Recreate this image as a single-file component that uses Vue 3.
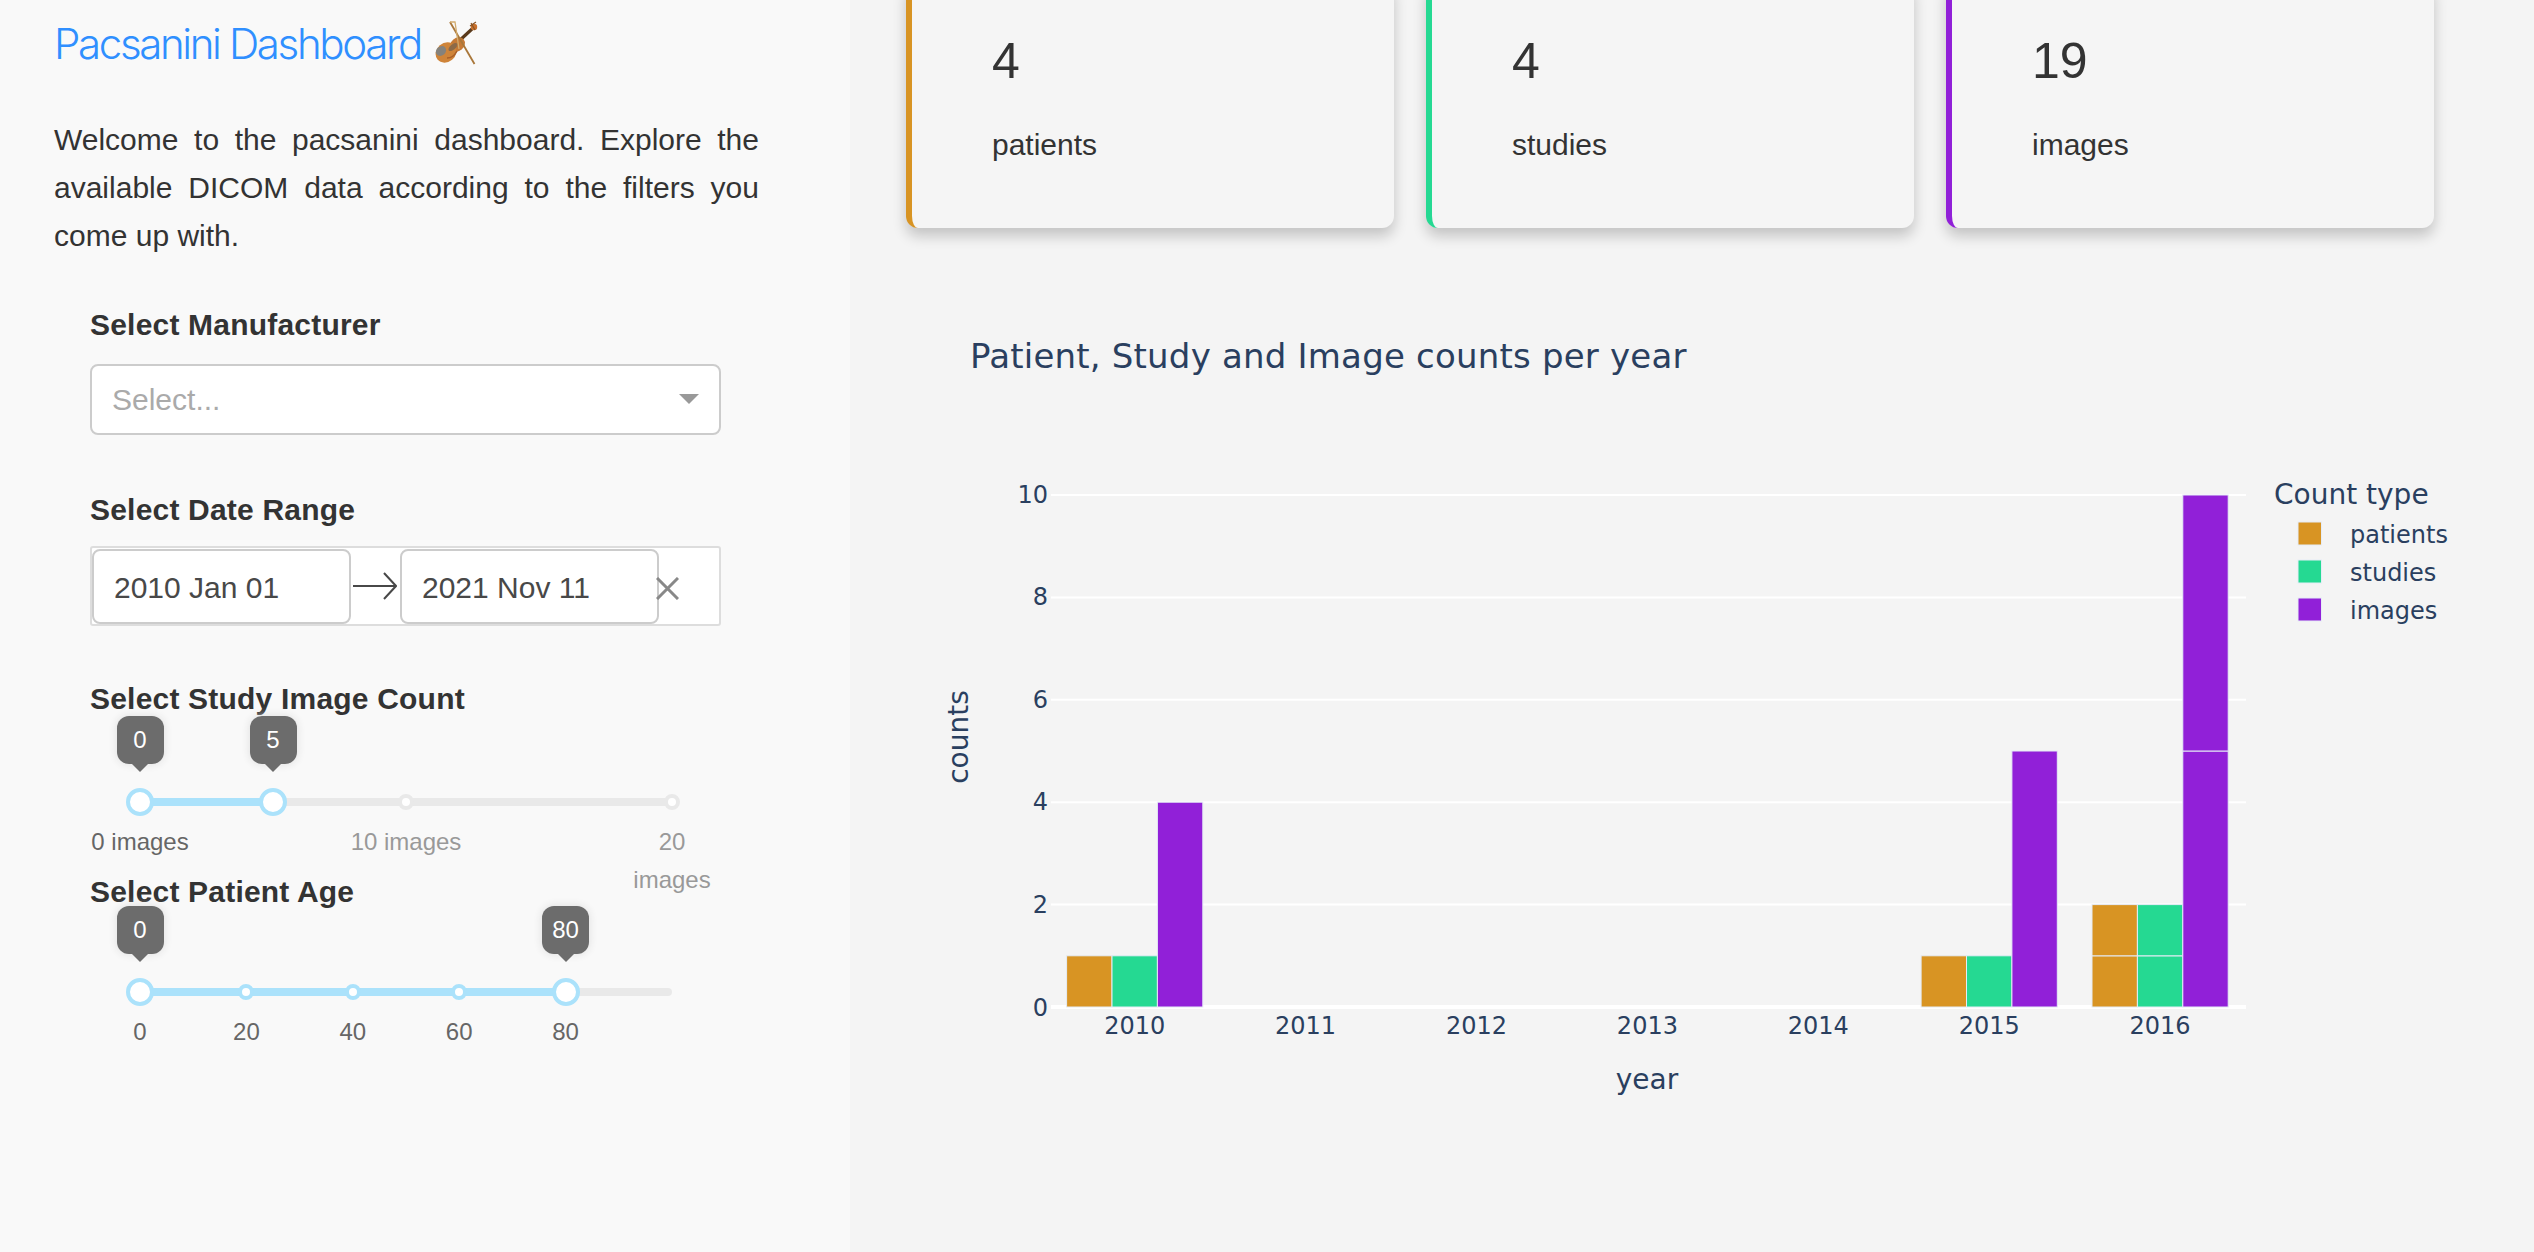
<script setup>
// Tableau de bord Pacsanini : filtres à gauche, compteurs et histogramme à droite
const counters = [
  { value: 4, label: 'patients', color: '#d89423' },
  { value: 4, label: 'studies', color: '#25d992' },
  { value: 19, label: 'images', color: '#9120d8' },
]

const imageSlider = {
  max: 20,
  range: [0, 5],
  marks: [
    { value: 0, label: '0 images' },
    { value: 10, label: '10 images' },
    { value: 20, label: '20 images', narrow: true },
  ],
}
const ageSlider = {
  max: 100,
  range: [0, 80],
  marks: [0, 20, 40, 60, 80].map((v) => ({ value: v, label: String(v) })),
}
const sliders = [
  { title: 'Select Study Image Count', ...imageSlider },
  { title: 'Select Patient Age', ...ageSlider },
]

function pct(value, max) {
  return `${(value / max) * 100}%`
}
function isActive(slider, value) {
  return value >= slider.range[0] && value <= slider.range[1]
}

// Axes du graphique, en coordonnées de page (voir viewBox)
const zeroY = 1007
const unit = 51.2
const yTicks = [0, 2, 4, 6, 8, 10]
const years = [2010, 2011, 2012, 2013, 2014, 2015, 2016]
const yearX = (i) => 1134.7 + i * 170.9
const barW = 45.4

// Une ligne par segment empilé : annee, serie, base, hauteur
const segments = [
  [0, 0, 0, 1], [0, 1, 0, 1], [0, 2, 0, 4],
  [5, 0, 0, 1], [5, 1, 0, 1], [5, 2, 0, 5],
  [6, 0, 0, 1], [6, 0, 1, 1], [6, 1, 0, 1], [6, 1, 1, 1], [6, 2, 0, 5], [6, 2, 5, 5],
].map(([year, serie, base, size]) => ({
  x: yearX(year) - barW * 1.5 + serie * barW,
  y: zeroY - (base + size) * unit,
  h: size * unit,
  fill: counters[serie].color,
}))
</script>

<template>
  <div class="page">
    <aside class="sidebar">
      <h2 class="title">
        <span>Pacsanini Dashboard</span>
        <svg class="violin" viewBox="0 0 44 44" aria-hidden="true">
          <path d="M25 20 L38 8" stroke="#5a3a1c" stroke-width="3.2" fill="none" />
          <circle cx="40" cy="6" r="3.2" fill="#c8702c" />
          <path d="M37 2 L41 9 M42 1 L36 5" stroke="#8a5526" stroke-width="1.2" fill="none" />
          <ellipse cx="23.5" cy="23.5" rx="8" ry="6.5" transform="rotate(-40 23.5 23.5)" fill="#c67a36" />
          <ellipse cx="12" cy="31.5" rx="11" ry="9.5" transform="rotate(-40 12 31.5)" fill="#cf8439" />
          <ellipse cx="7" cy="30" rx="5.5" ry="4.5" transform="rotate(-40 7 30)" fill="#85827c" />
          <ellipse cx="19" cy="26" rx="5.5" ry="2.6" transform="rotate(-40 19 26)" fill="#8c6a48" />
          <path d="M13 37 C17 37 21 34 23 30" stroke="#a85f28" stroke-width="1.6" fill="none" />
          <path d="M16 1 L40.5 43" stroke="#a9773a" stroke-width="1.8" fill="none" />
          <path d="M16 1 L21 1 L25 28" stroke="#d2ab6d" stroke-width="1.3" fill="none" />
        </svg>
      </h2>
      <p class="intro">
        Welcome to the pacsanini dashboard. Explore the available DICOM data according to the filters you come up with.
      </p>

      <div class="filters">
        <label class="filter-label">Select Manufacturer</label>
        <div class="select">
          <span>Select...</span>
          <i class="caret"></i>
        </div>

        <label class="filter-label date-label">Select Date Range</label>
        <div class="dates">
          <span class="date-input">2010 Jan 01</span>
          <svg class="date-arrow" viewBox="0 0 44 28" aria-hidden="true">
            <path d="M0 14 H43 M31 1 L43 14 L31 27" fill="none" stroke="#484848" stroke-width="2" />
          </svg>
          <span class="date-input">2021 Nov 11</span>
          <svg class="date-clear" viewBox="0 0 23 23" aria-hidden="true">
            <path d="M1 1 L22 22 M22 1 L1 22" fill="none" stroke="#888" stroke-width="3" />
          </svg>
        </div>

        <template v-for="slider in sliders" :key="slider.title">
          <label class="filter-label slider-label">{{ slider.title }}</label>
          <div class="slider">
            <div
              class="slider-track"
              :style="{ left: pct(slider.range[0], slider.max), width: pct(slider.range[1] - slider.range[0], slider.max) }"
            ></div>
            <span
              v-for="mark in slider.marks"
              :key="'dot' + mark.value"
              class="slider-dot"
              :class="{ active: isActive(slider, mark.value) }"
              :style="{ left: pct(mark.value, slider.max) }"
            ></span>
            <span
              v-for="mark in slider.marks"
              :key="'mark' + mark.value"
              class="slider-mark"
              :class="{ active: isActive(slider, mark.value), narrow: mark.narrow }"
              :style="{ left: pct(mark.value, slider.max) }"
            >{{ mark.label }}</span>
            <template v-for="value in slider.range" :key="value">
              <span class="slider-handle" :style="{ left: pct(value, slider.max) }"></span>
              <span class="slider-tip" :style="{ left: pct(value, slider.max) }">{{ value }}</span>
            </template>
          </div>
        </template>
      </div>
    </aside>

    <main class="main">
      <div class="cards">
        <div v-for="c in counters" :key="c.label" class="card" :style="{ borderLeftColor: c.color }">
          <div class="card-value">{{ c.value }}</div>
          <div class="card-label">{{ c.label }}</div>
        </div>
      </div>

      <svg class="chart" viewBox="850 260 1684 992">
        <text x="970" y="368" class="chart-title">Patient, Study and Image counts per year</text>

        <g v-for="t in yTicks" :key="t">
          <line
            x1="1051"
            x2="2246"
            :y1="zeroY - t * unit"
            :y2="zeroY - t * unit"
            stroke="#fff"
            :stroke-width="t === 0 ? 4 : 2"
          />
          <text x="1048" :y="zeroY - t * unit + (t === 0 ? 9 : 8)" text-anchor="end" class="tick">{{ t }}</text>
        </g>

        <rect
          v-for="(s, i) in segments"
          :key="i"
          :x="s.x"
          :y="s.y"
          :width="barW"
          :height="s.h"
          :fill="s.fill"
          stroke="#e5ecf6"
          stroke-width="1"
        />

        <text v-for="(y, i) in years" :key="y" :x="yearX(i)" y="1034" text-anchor="middle" class="tick">{{ y }}</text>

        <text x="1647" y="1089" text-anchor="middle" class="axis-title">year</text>
        <text transform="translate(968 737) rotate(-90)" text-anchor="middle" class="axis-title">counts</text>

        <text x="2274" y="504" class="axis-title">Count type</text>
        <g v-for="(c, i) in counters" :key="c.label">
          <rect x="2298" :y="522 + i * 38" width="23.5" height="23" :fill="c.color" stroke="#e5ecf6" stroke-width="1" />
          <text x="2350" :y="543 + i * 38" class="tick">{{ c.label }}</text>
        </g>
      </svg>
    </main>
  </div>
</template>

<style>
html,
body {
  margin: 0;
  overflow: hidden;
}
</style>

<style scoped>
.page {
  display: flex;
  width: 2534px;
  height: 1252px;
  overflow: hidden;
  font-family: "Liberation Sans", Arial, sans-serif;
  color: #333;
}

.sidebar {
  flex: 0 0 850px;
  box-sizing: border-box;
  padding: 13px 91px 0 54px;
  background: #f9f9f9;
}

.title {
  display: flex;
  align-items: center;
  height: 60px;
  margin: 0;
  font-family: "Inter", "Liberation Sans", sans-serif;
  font-size: 42px;
  font-weight: 300;
  letter-spacing: -2.35px;
  color: #2f8fff;
  white-space: nowrap;
}

.violin {
  width: 44px;
  height: 44px;
  margin-left: 13px;
}

.intro {
  margin: 43px 0 0;
  font-size: 30px;
  line-height: 48px;
  text-align: justify;
}

.filters {
  margin: 41px 38px 0 36px;
}

.filter-label {
  display: block;
  font-size: 30px;
  font-weight: 700;
  line-height: 48px;
  letter-spacing: 0.2px;
}

.select {
  display: flex;
  align-items: center;
  justify-content: space-between;
  box-sizing: border-box;
  height: 71px;
  margin-top: 15px;
  padding: 0 20px;
  background: #fff;
  border: 2px solid #ccc;
  border-radius: 8px;
  font-size: 30px;
  color: #aaa;
}

.caret {
  border-style: solid;
  border-width: 10px 10px 0;
  border-color: #999 transparent transparent;
  margin-top: -2px;
}

.date-label {
  margin-top: 51px;
}

.dates {
  position: relative;
  display: flex;
  align-items: center;
  box-sizing: border-box;
  height: 80px;
  margin-top: 12px;
  background: #fff;
  border: 2px solid #ddd;
  border-radius: 3px;
}

.date-input {
  box-sizing: border-box;
  flex: 0 0 259px;
  height: 75px;
  padding-left: 20px;
  border: 2px solid #ccc;
  border-radius: 8px;
  background: #fff;
  font-size: 30px;
  line-height: 73px;
  color: #484848;
}

.date-arrow {
  flex: 0 0 44px;
  height: 28px;
  margin: 0 3px 0 2px;
}

.date-clear {
  flex: 0 0 23px;
  height: 23px;
  margin: 4px 0 0 -3px;
  position: relative;
}

.slider-label {
  margin-top: 49px;
}

.slider {
  position: relative;
  height: 8px;
  margin: 75px 49px 62px 50px;
  background: #e9e9e9;
  border-radius: 4px;
}

.slider-label + .slider ~ .slider-label {
  margin-top: 0;
}

.slider-label + .slider ~ .slider {
  margin-top: 72px;
}

.slider-track {
  position: absolute;
  top: 0;
  height: 8px;
  background: #abe2fb;
}

.slider-dot {
  position: absolute;
  top: -4px;
  box-sizing: border-box;
  width: 16px;
  height: 16px;
  margin-left: -8px;
  background: #fff;
  border: 4px solid #e9e9e9;
  border-radius: 50%;
}

.slider-dot.active {
  border-color: #abe2fb;
}

.slider-handle {
  position: absolute;
  top: -10px;
  box-sizing: border-box;
  width: 28px;
  height: 28px;
  margin-left: -14px;
  background: #fff;
  border: 4px solid #abe2fb;
  border-radius: 50%;
}

.slider-mark {
  position: absolute;
  top: 25px;
  width: 120px;
  margin-left: -60px;
  font-size: 24px;
  line-height: 38.4px;
  text-align: center;
  color: #999;
}

.slider-mark.active {
  color: #666;
}

.slider-mark.narrow {
  width: 100px;
  margin-left: -50px;
}

.slider-tip {
  position: absolute;
  top: -82px;
  width: 47px;
  height: 48px;
  margin-left: -23.5px;
  background: #6c6c6c;
  border-radius: 12px;
  box-shadow: 0 0 8px #ddd;
  font-size: 24px;
  line-height: 48px;
  text-align: center;
  color: #fff;
}

.slider-tip::after {
  content: "";
  position: absolute;
  top: 100%;
  left: 50%;
  margin-left: -8px;
  border-style: solid;
  border-width: 8px 8px 0;
  border-color: #6c6c6c transparent transparent;
}

.main {
  flex: 1;
  background: #f4f4f4;
  min-width: 0;
}

.cards {
  display: flex;
  gap: 32px;
  margin: -20px 0 0 56px;
}

.card {
  box-sizing: border-box;
  width: 488px;
  height: 248px;
  padding: 51px 0 0 80px;
  background: #f5f5f5;
  border-left: 6px solid;
  border-radius: 12px;
  box-shadow: 0 8px 14px rgba(0, 0, 0, 0.2);
}

.card-value {
  font-size: 50px;
  line-height: 60px;
}

.card-label {
  margin-top: 30px;
  font-size: 30px;
  line-height: 48px;
}

.chart {
  display: block;
  width: 1684px;
  height: 992px;
  margin-top: 32px;
  font-family: "DejaVu Sans", Verdana, sans-serif;
}

.chart-title {
  font-size: 34px;
  letter-spacing: 0.2px;
  fill: #2a3f5f;
}

.tick {
  font-size: 24px;
  fill: #2a3f5f;
}

.axis-title {
  font-size: 28px;
  fill: #2a3f5f;
}
</style>
